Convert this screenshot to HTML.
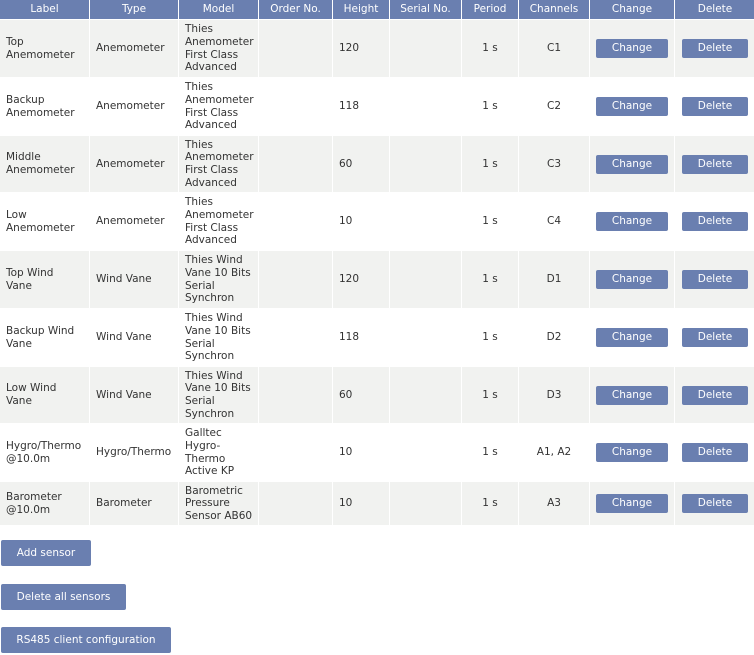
<!DOCTYPE html>
<html><head><style>
body{margin:0;background:#fff;font-family:"DejaVu Sans","Liberation Sans",sans-serif;font-size:10.5px;color:#333;width:754px;height:655px;overflow:hidden}
table{border-collapse:separate;border-spacing:1px 1px;table-layout:fixed;margin:-1px 0 0 -1px;width:756px}
th{background:#6a7fb0;color:#fff;font-weight:normal;height:18px;padding:0;text-align:center;line-height:19px;font-size:10.5px}
td{padding:0 0 0 6px;line-height:12.6px;vertical-align:middle}
tr.o td{background:#f1f2f0}
tr.e td{background:#fff}
td.c{text-align:center;padding:0}
.b{display:inline-block;background:#6a7fb0;color:#fff;border-radius:2px;text-align:center;height:19px;line-height:19px}
.bb{position:absolute;left:1px;background:#6a7fb0;color:#fff;border-radius:2px;height:26px;line-height:26px;text-align:center}
</style></head><body>
<table>
<colgroup><col style="width:89px"><col style="width:88px"><col style="width:79px"><col style="width:73px"><col style="width:56px"><col style="width:71px"><col style="width:56px"><col style="width:70px"><col style="width:84px"><col style="width:80px"></colgroup>
<tr><th>Label</th><th>Type</th><th>Model</th><th>Order No.</th><th>Height</th><th>Serial No.</th><th>Period</th><th>Channels</th><th>Change</th><th>Delete</th></tr>
<tr class="o" style="height:57px"><td>Top<br>Anemometer</td><td>Anemometer</td><td>Thies<br>Anemometer<br>First Class<br>Advanced</td><td></td><td>120</td><td></td><td class="c">1 s</td><td class="c">C1</td><td class="c"><span class="b" style="width:72px">Change</span></td><td class="c"><span class="b" style="width:66px">Delete</span></td></tr>
<tr class="e" style="height:57px"><td>Backup<br>Anemometer</td><td>Anemometer</td><td>Thies<br>Anemometer<br>First Class<br>Advanced</td><td></td><td>118</td><td></td><td class="c">1 s</td><td class="c">C2</td><td class="c"><span class="b" style="width:72px">Change</span></td><td class="c"><span class="b" style="width:66px">Delete</span></td></tr>
<tr class="o" style="height:56px"><td>Middle<br>Anemometer</td><td>Anemometer</td><td>Thies<br>Anemometer<br>First Class<br>Advanced</td><td></td><td>60</td><td></td><td class="c">1 s</td><td class="c">C3</td><td class="c"><span class="b" style="width:72px">Change</span></td><td class="c"><span class="b" style="width:66px">Delete</span></td></tr>
<tr class="e" style="height:57px"><td>Low<br>Anemometer</td><td>Anemometer</td><td>Thies<br>Anemometer<br>First Class<br>Advanced</td><td></td><td>10</td><td></td><td class="c">1 s</td><td class="c">C4</td><td class="c"><span class="b" style="width:72px">Change</span></td><td class="c"><span class="b" style="width:66px">Delete</span></td></tr>
<tr class="o" style="height:57px"><td>Top Wind<br>Vane</td><td>Wind Vane</td><td>Thies Wind<br>Vane 10 Bits<br>Serial<br>Synchron</td><td></td><td>120</td><td></td><td class="c">1 s</td><td class="c">D1</td><td class="c"><span class="b" style="width:72px">Change</span></td><td class="c"><span class="b" style="width:66px">Delete</span></td></tr>
<tr class="e" style="height:57px"><td>Backup Wind<br>Vane</td><td>Wind Vane</td><td>Thies Wind<br>Vane 10 Bits<br>Serial<br>Synchron</td><td></td><td>118</td><td></td><td class="c">1 s</td><td class="c">D2</td><td class="c"><span class="b" style="width:72px">Change</span></td><td class="c"><span class="b" style="width:66px">Delete</span></td></tr>
<tr class="o" style="height:56px"><td>Low Wind<br>Vane</td><td>Wind Vane</td><td>Thies Wind<br>Vane 10 Bits<br>Serial<br>Synchron</td><td></td><td>60</td><td></td><td class="c">1 s</td><td class="c">D3</td><td class="c"><span class="b" style="width:72px">Change</span></td><td class="c"><span class="b" style="width:66px">Delete</span></td></tr>
<tr class="e" style="height:57px"><td>Hygro/Thermo<br>@10.0m</td><td>Hygro/Thermo</td><td>Galltec<br>Hygro-<br>Thermo<br>Active KP</td><td></td><td>10</td><td></td><td class="c">1 s</td><td class="c">A1, A2</td><td class="c"><span class="b" style="width:72px">Change</span></td><td class="c"><span class="b" style="width:66px">Delete</span></td></tr>
<tr class="o" style="height:43px"><td>Barometer<br>@10.0m</td><td>Barometer</td><td>Barometric<br>Pressure<br>Sensor AB60</td><td></td><td>10</td><td></td><td class="c">1 s</td><td class="c">A3</td><td class="c"><span class="b" style="width:72px">Change</span></td><td class="c"><span class="b" style="width:66px">Delete</span></td></tr>
</table>
<div class="bb" style="top:540px;width:90px">Add sensor</div>
<div class="bb" style="top:584px;width:125px">Delete all sensors</div>
<div class="bb" style="top:627px;width:170px">RS485 client configuration</div>
</body></html>
